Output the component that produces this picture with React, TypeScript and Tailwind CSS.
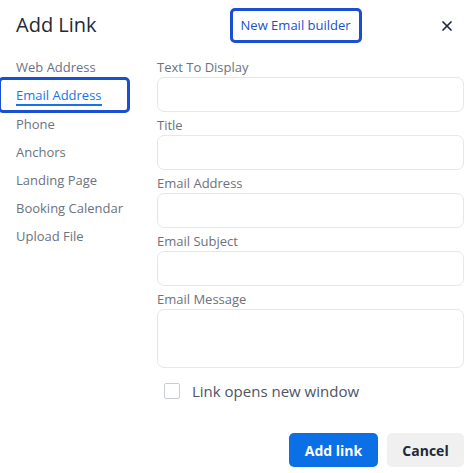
import { X } from "lucide-react";

const navItems = [
  "Web Address",
  "Email Address",
  "Phone",
  "Anchors",
  "Landing Page",
  "Booking Calendar",
  "Upload File",
];

const fields = [
  { label: "Text To Display", tall: false },
  { label: "Title", tall: false },
  { label: "Email Address", tall: false },
  { label: "Email Subject", tall: false },
  { label: "Email Message", tall: true },
];

export default function App() {
  return (
    <div
      className="w-[473px] h-[473px] bg-white overflow-hidden text-[#6b7280]"
      style={{ fontFamily: '"Open Sans", "Noto Sans", sans-serif' }}
    >
      {/* header */}
      <div className="flex items-center h-[52px] pl-4 pr-[18px]">
        <h2 className="text-[20px] leading-none text-[#1f2937] pb-[2px]">Add Link</h2>
        <button className="ml-[133px] h-[35px] px-[8px] rounded-[5px] border-[3px] border-[#1a4fd1] text-[13px] text-[#1d4fc9] leading-none mb-[1px]">
          New Email builder
        </button>
        <button className="ml-auto text-[#1e293b]">
          <X size={16} strokeWidth={2.6} />
        </button>
      </div>

      <div className="grid grid-cols-[157px_1fr] pr-[9px]">
        {/* left nav */}
        <ul className="pt-[2px]">
          {navItems.map((item) => {
            const active = item === "Email Address";
            return (
              <li key={item} className="relative h-[28.2px] pl-4 flex items-center text-[13px]">
                {active ? (
                  <>
                    <span className="text-[#1a73e8] border-b-2 border-[#1a73e8] leading-[18px]">
                      {item}
                    </span>
                    <span className="absolute left-[-2px] top-[-5px] w-[132px] h-[36px] rounded-[5px] border-[3px] border-[#1a4fd1]" />
                  </>
                ) : (
                  <span>{item}</span>
                )}
              </li>
            );
          })}
        </ul>

        {/* form */}
        <div className="pt-[5px]">
          {fields.map((f) => (
            <div key={f.label} className="mb-[3px]">
              <label className="block h-[20px] leading-[20px] text-[13px]">{f.label}</label>
              <div
                className={`${f.tall ? "h-[59px]" : "h-[35px]"} w-full rounded-[7px] border border-[#e5e7eb]`}
              />
            </div>
          ))}
          <label className="flex items-center gap-[12px] mt-[11px] ml-[7px] h-[24px]">
            <span className="w-[16px] h-[16px] rounded-[2px] border border-[#c9cdd3] bg-white" />
            <span className="text-[15px] text-[#4b5563]">Link opens new window</span>
          </label>
          <div className="flex justify-end gap-[9px] mt-[30px]">
            <button className="w-[89px] h-[34px] rounded-[5px] bg-[#0b6fe6] text-white text-[14px] font-bold">
              Add link
            </button>
            <button className="w-[77px] h-[34px] rounded-[5px] bg-[#f0f0f0] text-[#1f2937] text-[14px] font-bold">
              Cancel
            </button>
          </div>
        </div>
      </div>
    </div>
  );
}
